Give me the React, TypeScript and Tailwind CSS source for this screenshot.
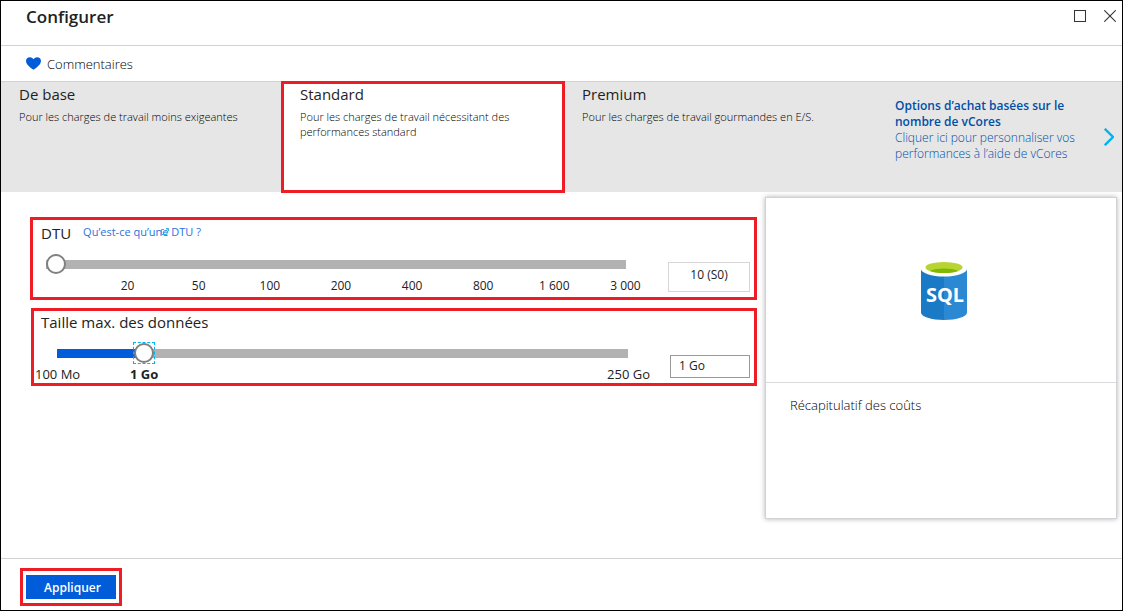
import { useState } from 'react';

const DTU_STEPS = ['20', '50', '100', '200', '400', '800', '1 600', '3 000'];

const THUMB =
  'block w-full appearance-none bg-transparent h-5 outline-none [&::-webkit-slider-runnable-track]:h-[9px] [&::-webkit-slider-thumb]:-mt-[6px] [&::-webkit-slider-thumb]:size-5 [&::-webkit-slider-thumb]:appearance-none [&::-webkit-slider-thumb]:rounded-full [&::-webkit-slider-thumb]:border-2 [&::-webkit-slider-thumb]:border-[#808080] [&::-webkit-slider-thumb]:bg-white';

function HeartIcon() {
  return (
    <svg width="15" height="13" viewBox="0 0 15 13" aria-hidden="true">
      <path
        d="M7.5 12.8C5 10.9 0 7.6 0 3.9 0 1.600 1.700.2 3.800.2c1.600 0 2.900.8 3.700 2C8.300 1 9.600.2 11.200.2 13.300.2 15 1.600 15 3.900c0 3.700-5 7-7.500 8.900z"
        fill="#015cda"
      />
    </svg>
  );
}

function SqlIcon() {
  return (
    <svg width="46" height="58" viewBox="0 0 46 58" role="img" aria-label="Base de données SQL">
      <path d="M0 7v43.500c0 4.100 10.300 7.500 23 7.500V7z" fill="#1b7ac6" />
      <path d="M23 58c12.700 0 23-3.400 23-7.500V7H23z" fill="#2b88d2" />
      <ellipse cx="23" cy="7" rx="23" ry="7.500" fill="#fff" />
      <ellipse cx="23" cy="5.500" rx="18.500" ry="5.500" fill="#b8d432" />
      <path
        d="M37 8.900C34 7.300 29 6.600 23 6.600S12 7.300 9 8.900C12.300 10.300 17 11 23 11s10.700-.7 14-2.100z"
        fill="#7fba00"
      />
      <text
        x="24"
        y="40"
        textAnchor="middle"
        fill="#fff"
        fontSize="20"
        fontWeight="700"
        fontFamily="'Noto Sans', 'Open Sans', sans-serif"
      >
        SQL
      </text>
    </svg>
  );
}

function Tier({ title, text, selected, onSelect }: { title: string; text: string; selected: boolean; onSelect: () => void }) {
  return (
    <button
      type="button"
      aria-pressed={selected}
      onClick={onSelect}
      className={
        selected
          ? 'relative flex flex-col items-start bg-white px-[18px] pt-[2px] text-left outline-3 -outline-offset-2 outline-[#ee1c25]'
          : 'flex flex-col items-start px-[18px] pt-[2px] text-left'
      }
    >
      <span className="text-[15px] leading-5 font-medium text-[#1f1f1f]">{title}</span>
      <span className="mt-[5px] text-[11px] leading-[15px] font-light text-black">{text}</span>
    </button>
  );
}

export default function App() {
  const [tier, setTier] = useState('Standard');
  const [dtu, setDtu] = useState(0);
  const [size, setSize] = useState(14);

  const tiers = [
    { title: 'De base', text: 'Pour les charges de travail moins exigeantes' },
    { title: 'Standard', text: 'Pour les charges de travail nécessitant des performances standard' },
    { title: 'Premium', text: 'Pour les charges de travail gourmandes en E/S.' },
  ];

  return (
    <div className="flex min-h-screen flex-col bg-white pr-px pb-[3px] font-['Open_Sans','Noto_Sans',sans-serif] text-[#222222]">
      <div className="flex flex-1 flex-col border border-black">
        <header className="flex h-[45px] items-start justify-between border-b border-[#d2d2d2] pr-[6px] pl-[25px]">
          <h1 className="pt-1 text-[17px] leading-6 font-semibold">Configurer</h1>
          <div className="flex gap-[18px] pt-[9px]">
            <button type="button" aria-label="Agrandir" className="size-3 border border-[#333333]" />
            <button type="button" aria-label="Fermer" className="size-3">
              <svg width="12" height="12" viewBox="0 0 12 12" aria-hidden="true">
                <path d="M.3.3l11.400 11.400M11.700.3L.3 11.700" stroke="#333" strokeWidth="1.100" />
              </svg>
            </button>
          </div>
        </header>

        <div className="flex h-9 items-center border-b border-[#d2d2d2] pl-[25px]">
          <button type="button" className="flex items-center gap-[6px] text-[13px] leading-5 font-light text-black">
            <HeartIcon />
            Commentaires
          </button>
        </div>

        <div className="grid min-h-[110px] grid-cols-[281fr_282fr_279fr_279fr] bg-[#e6e6e6]">
          {tiers.map((t) => (
            <Tier key={t.title} {...t} selected={tier === t.title} onSelect={() => setTier(t.title)} />
          ))}
          <a href="#vcores" className="flex items-center justify-between pr-2 pl-[52px] text-[12px] leading-4 text-[#004ea8]">
            <span className="pb-[14px]">
              <strong className="block max-w-[180px] font-semibold">Options d’achat basées sur le nombre de vCores</strong>
              <span className="block max-w-[182px] font-light">Cliquer ici pour personnaliser vos performances à l’aide de vCores</span>
            </span>
            <svg width="10" height="18" viewBox="0 0 10 18" aria-hidden="true">
              <path d="M.8.8L9 9 .8 17.200" fill="none" stroke="#00b4f0" strokeWidth="2.400" />
            </svg>
          </a>
        </div>

        <main className="flex flex-1 gap-2 pr-[5px] pl-[29px]">
          <div className="flex flex-1 flex-col gap-2 pt-[25px]">
            <section className="flex h-[83px] gap-[42px] border-3 border-[#ee1c25] pr-1">
              <div className="flex flex-1 flex-col pt-[3px] pl-[13px]">
                <div className="-ml-[5px] flex items-center gap-3">
                  <label htmlFor="dtu" className="text-[15px] leading-5">
                    DTU
                  </label>
                  <a href="#dtu" className="relative -mt-[3px] text-[11px] leading-4 text-[#2a72de]">
                    Qu’est-ce qu’une DTU ?
                    <svg className="absolute top-1 left-[78px]" width="8" height="7" viewBox="0 0 8 7" aria-hidden="true">
                      <path d="M3 1.500H.5v5H6V4.500M3 4.500L7 .7M5 .5h2.500V3" fill="none" stroke="#32b0e0" />
                    </svg>
                  </a>
                </div>
                <input
                  id="dtu"
                  type="range"
                  min={0}
                  max={8}
                  value={dtu}
                  onChange={(e) => setDtu(Number(e.target.value))}
                  className={`${THUMB} mt-[11px] [&::-webkit-slider-runnable-track]:bg-[#b2b2b2]`}
                />
                <div className="-mr-[35px] ml-[46px] grid grid-cols-8 pt-1 text-center text-[12px] leading-4">
                  {DTU_STEPS.map((s) => (
                    <span key={s}>{s}</span>
                  ))}
                </div>
              </div>
              <output htmlFor="dtu" className="mt-[42px] h-[30px] w-[82px] border border-[#d6d6d6] pt-1 text-center text-[12px] leading-4">
                10 (S0)
              </output>
            </section>

            <section className="ml-px flex h-[78px] gap-[42px] border-3 border-[#ee1c25] pr-1">
              <div className="flex flex-1 flex-col pt-px pl-[23px]">
                <label htmlFor="size" className="-ml-4 text-[15px] leading-5">
                  Taille max. des données
                </label>
                <div className="relative mt-[11px]">
                  <input
                    id="size"
                    type="range"
                    min={0}
                    max={100}
                    value={size}
                    onChange={(e) => setSize(Number(e.target.value))}
                    className={`${THUMB} [&::-webkit-slider-runnable-track]:bg-[linear-gradient(to_right,#015cda_15%,#b2b2b2_15%)]`}
                  />
                  <span className="pointer-events-none absolute -top-px left-[13.3%] size-[22px] border border-dashed border-[#00b4f0]" />
                </div>
                <div className="-mr-[22px] -ml-[22px] flex pt-px text-[13px] leading-5">
                  <span className="w-[95px]">100 Mo</span>
                  <strong className="flex-1 font-bold">1 Go</strong>
                  <span>250 Go</span>
                </div>
              </div>
              <input
                aria-label="Taille max. des données"
                defaultValue="1 Go"
                className="mt-[44px] h-[23px] w-20 border border-[#999999] px-2 pb-[3px] text-[12px] leading-4"
              />
            </section>
          </div>

          <aside className="mt-[5px] h-[322px] w-[352px] border border-[#d2d2d6] bg-white shadow-[0_0_5px_rgba(0,0,0,0.3)]">
            <div className="flex h-[185px] items-center justify-center border-b border-[#d8dadc] pt-[2px] pl-[6px]">
              <SqlIcon />
            </div>
            <h2 className="px-6 pt-3 text-[13px] leading-5 font-light text-black">Récapitulatif des coûts</h2>
          </aside>
        </main>

        <footer className="flex border-t border-[#d2d2d2] pt-[9px] pb-1 pl-[19px]">
          <div className="flex border-3 border-[#ee1c25] px-[3px] py-1">
            <button type="button" className="h-6 w-[90px] bg-[#015cda] pt-px pl-[3px] text-[12px] leading-4 font-semibold text-white">
              Appliquer
            </button>
          </div>
        </footer>
      </div>
    </div>
  );
}
